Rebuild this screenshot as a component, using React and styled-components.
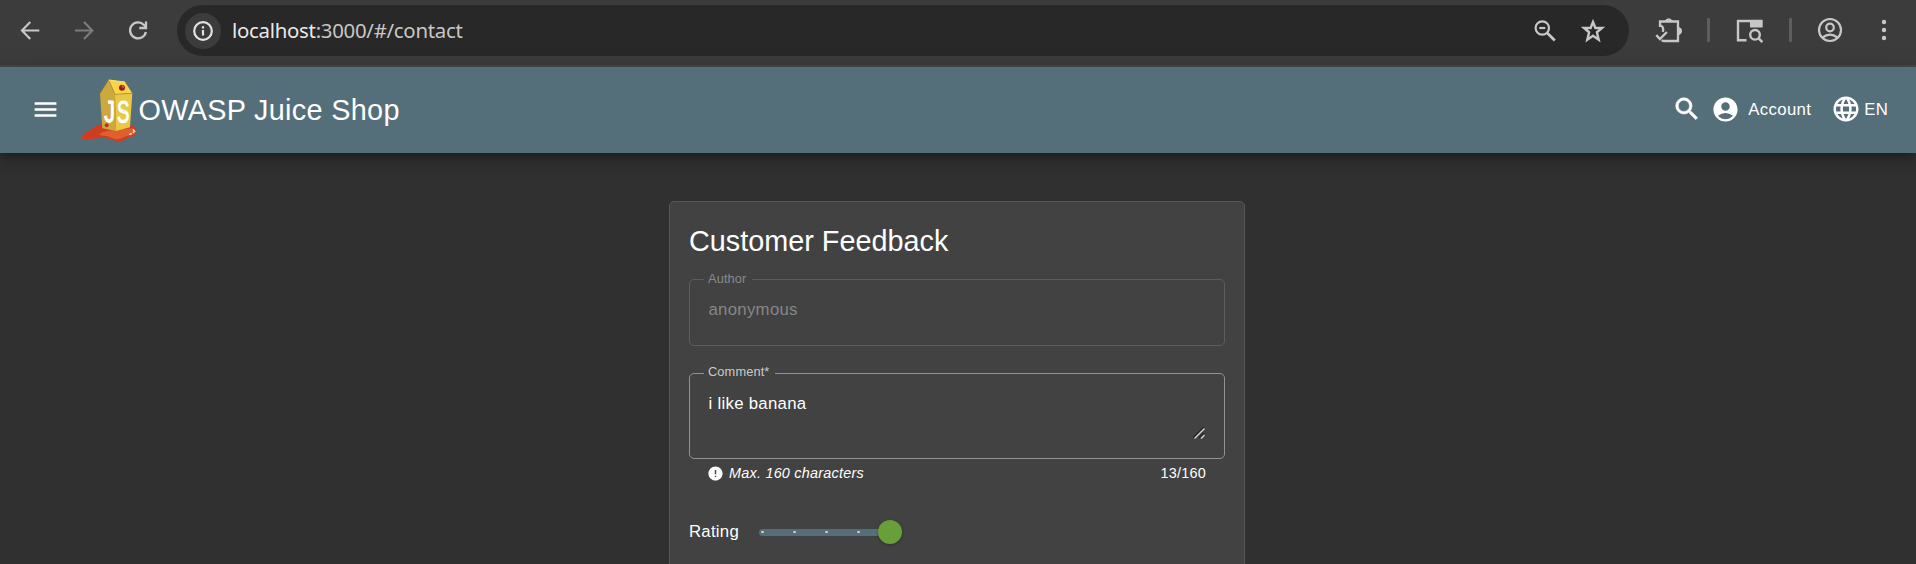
import React from "react";
import styled, { createGlobalStyle } from "styled-components";
import { MdMenu, MdSearch, MdAccountCircle, MdLanguage, MdError } from "react-icons/md";

const GlobalStyle = createGlobalStyle`
  * { box-sizing: border-box; }
  html, body { margin: 0; height: 100%; overflow: hidden; background: #303030; }
  body { font-family: "Liberation Sans", Arial, sans-serif; color: #fff; }
`;

const Page = styled.div`
  display: flex;
  flex-direction: column;
  width: 100%;
  height: 564px;
  overflow: hidden;
  background: #303030;
`;

const BrowserBar = styled.div`
  flex: none;
  display: flex;
  align-items: center;
  height: 67px;
  padding: 0 0 5px 19px;
  background: #3c3c3c;
  border-bottom: 2px solid #484848;
`;

const BrowserIcon = styled.svg`
  flex: none;
  display: block;
  width: ${(p) => p.$size || 22}px;
  height: ${(p) => p.$size || 22}px;
  margin-right: ${(p) => p.$gap || 0}px;
  fill: none;
  stroke: ${(p) => p.$color || "#c7c7c7"};
  stroke-width: 2.2;
`;

const AddressBar = styled.div`
  flex: none;
  display: flex;
  align-items: center;
  width: 1452px;
  height: 51px;
  padding: 0 24px 0 8px;
  margin: 1px 26px 0 0;
  border-radius: 26px;
  background: #282828;
`;

const SiteInfo = styled.div`
  display: flex;
  align-items: center;
  justify-content: center;
  width: 36px;
  height: 36px;
  border-radius: 50%;
  background: #3c3c3c;
`;

const Url = styled.div`
  flex: 1;
  margin-left: 11px;
  padding-bottom: 2px;
  font: 20.4px/28px "Noto Sans", "Open Sans", sans-serif;
  letter-spacing: -0.28px;
  color: #c7c7c7;
  white-space: nowrap;
`;

const Host = styled.span`
  color: #e8e8e8;
`;

const Divider = styled.div`
  flex: none;
  width: 3px;
  height: 24px;
  margin-right: ${(p) => p.$gap}px;
  background: #5e5e5e;
  border-radius: 1px;
`;

const Toolbar = styled.header`
  flex: none;
  position: relative;
  display: flex;
  align-items: center;
  height: 86px;
  padding: 0 28px 2px 31px;
  background: #546e7a;
  box-shadow: 0 4px 6px -1px rgba(0, 0, 0, 0.2), 0 7px 12px rgba(0, 0, 0, 0.14),
    0 1px 22px rgba(0, 0, 0, 0.12);
`;

const Logo = styled.svg`
  display: block;
  width: 58px;
  height: 64px;
  margin: 3px 0 0 20px;
`;

const Brand = styled.div`
  flex: 1;
  margin: 2px 0 0 0.5px;
  font-size: 28.8px;
  line-height: 34px;
  letter-spacing: 0.32px;
  white-space: nowrap;
`;

const SearchIcon = styled(MdSearch)`
  path:last-child {
    stroke: currentColor;
    stroke-width: 0.5px;
  }
`;

const ToolbarAction = styled.div`
  display: flex;
  align-items: center;
  gap: ${(p) => p.$gap || 0}px;
  margin-left: ${(p) => p.$before || 0}px;
  font-size: 16.8px;
  line-height: 20px;
  letter-spacing: ${(p) => p.$track || 0}px;
`;

const ActionLabel = styled.span`
  padding-top: 1px;
`;

const Main = styled.main`
  flex: 1;
  display: flex;
  justify-content: center;
  align-items: flex-start;
  padding: 48px 2px 0 0;
`;

const Card = styled.section`
  width: 576px;
  height: 500px;
  padding: 21px 19px 0;
  border: 1px solid #575757;
  border-radius: 5px;
  background: #424242;
`;

const Title = styled.h1`
  margin: 0;
  font-size: 28.8px;
  font-weight: 400;
  line-height: 36px;
`;

const Field = styled.fieldset`
  display: flex;
  min-width: 0;
  height: ${(p) => p.$height}px;
  margin: ${(p) => p.$before}px 0 0;
  padding: 11px 19px 0 18px;
  border: 1px solid ${(p) => (p.$disabled ? "#5e5e5e" : "#919191")};
  border-radius: 5px;
  color: ${(p) => (p.$disabled ? "#878787" : "#fff")};
  font-size: 16.8px;
  line-height: 24px;
  letter-spacing: 0.28px;
`;

const Legend = styled.legend`
  margin-left: -4px;
  padding: 0 6px 0 4px;
  font-size: 12.8px;
  line-height: 16px;
  letter-spacing: 0.12px;
  color: ${(p) => (p.$disabled ? "#8a8a8a" : "#cbcbcb")};
`;

const LegendText = styled.span`
  display: block;
  margin: ${(p) => (p.$raised ? "-1px 0 1px" : 0)};
`;

const FieldText = styled.div`
  flex: 1;
  padding-left: 0.5px;
`;

const ResizeGrip = styled.svg`
  align-self: flex-end;
  width: 12px;
  height: 12px;
  margin-bottom: 19px;
`;

const HintRow = styled.div`
  display: flex;
  align-items: center;
  height: 20px;
  margin-top: 4px;
  padding: 0 19px 0 18px;
  font-size: 14.4px;
  letter-spacing: 0.24px;
`;

const Hint = styled.em`
  flex: 1;
  margin-left: 5px;
`;

const RatingRow = styled.div`
  display: flex;
  align-items: center;
  height: 24px;
  margin-top: 37px;
  font-size: 16.8px;
  letter-spacing: 0.25px;
`;

const Slider = styled.div`
  display: flex;
  align-items: center;
  margin-left: 20px;
`;

const Track = styled.div`
  display: flex;
  align-items: center;
  gap: 29px;
  width: 131px;
  height: 7px;
  padding: 0 2px 1px;
  border-radius: 4px;
  background: #546e7a;
`;

const Tick = styled.i`
  flex: none;
  width: 3px;
  height: 2px;
  border-radius: 1px;
  background: #c9cfd2;
`;

const Thumb = styled.div`
  width: 24px;
  height: 24px;
  margin-left: -12.5px;
  border-radius: 50%;
  background: #689f38;
  box-shadow: 0 1px 3px rgba(0, 0, 0, 0.3);
`;

const LogoLetter = styled.text`
  font: 400 68px "Liberation Sans", Arial, sans-serif;
  fill: #fff;
  stroke: #fff;
  stroke-width: 2.5;
`;

function JuiceLogo() {
  return (
    <Logo viewBox="30 24 174 192">
      <path d="M35 198C36 188 52 185 65 174C76 163 90 158 110 160L180 163C196 165 202 174 197 188C190 200 176 197 163 206C148 216 137 210 120 204C99 198 74 204 48 205C39 205 34 203 35 198Z" fill="#cf3d20" />
      <path d="M88 192C98 176 130 178 159 173L190 172C202 181 195 192 181 193C168 194 156 203 142 205C128 205 119 194 101 194Q93 194 88 192Z" fill="#df5f2d" />
      <path d="M116 27L90 68L97 172L138 180L135 69Z" fill="#cda83c" />
      <path d="M116 27L165 33L187 67L135 70Z" fill="#fbd348" />
      <path d="M135 70L187 67L180 169L138 180Z" fill="#e9c846" />
      <path d="M90 68L116 27L135 70L187 67" fill="none" stroke="#a98528" strokeWidth="2" />
      <path d="M116 27L165 33" stroke="#ffe46c" strokeWidth="3" />
      <circle cx="156" cy="50" r="9" fill="#8f2413" />
      <circle cx="159" cy="47" r="4" fill="#dc4b2b" />
      <circle cx="110" cy="163" r="6" fill="#b93518" />
      <LogoLetter transform="translate(103 152) skewY(3) scale(1 1.35)" textLength="32" lengthAdjust="spacingAndGlyphs">J</LogoLetter>
      <LogoLetter transform="translate(141 155) skewY(-4) scale(1 1.34)" textLength="37" lengthAdjust="spacingAndGlyphs">S</LogoLetter>
      <path d="M190 176L194 181L190 184M179 190L184 188" fill="none" stroke="#ffe4dc" strokeWidth="4" strokeLinecap="round" />
    </Logo>
  );
}

export default function App() {
  return (
    <>
      <GlobalStyle />
      <Page>
        <BrowserBar>
          <BrowserIcon viewBox="0 0 22 22" $gap={32}>
            <path d="M20.3 11.5H3.5M11.3 3.1L3 11.5L11.3 19.9" />
          </BrowserIcon>
          <BrowserIcon viewBox="0 0 22 22" $gap={32} $color="#7c7c7c">
            <path d="M2 11.5H18.5M11 3.1L19.3 11.5L11 19.9" />
          </BrowserIcon>
          <BrowserIcon viewBox="0 0 22 22" $gap={28}>
            <path d="M18.9 13A8 8 0 1 1 17 5.9L19 8.1M19 2.5V9H12.3" strokeWidth="2.3" />
          </BrowserIcon>
          <AddressBar>
            <SiteInfo>
              <BrowserIcon viewBox="0 0 22 22" $color="#e3e3e3">
                <circle cx="11" cy="11" r="8.8" />
                <path d="M11 10V15.6M11 6.3V8.6" />
              </BrowserIcon>
            </SiteInfo>
            <Url><Host>localhost</Host>:3000/#/contact</Url>
            <BrowserIcon viewBox="0 0 24 24" $size={24} $gap={24}>
              <circle cx="9.3" cy="9" r="6.7" />
              <path d="M14 13.7L21.8 21.5" strokeWidth="2.7" />
              <path d="M6.3 9H12.3" />
            </BrowserIcon>
            <BrowserIcon viewBox="0 0 24 24" $size={24}>
              <path d="M12 3L14.4 9H21L15.9 13.3L17.7 20.8L12 16.8L6.3 20.8L8.1 13.3L3 9H9.6Z" strokeWidth="2.4" />
            </BrowserIcon>
          </AddressBar>
          <BrowserIcon viewBox="0 0 28 28" $size={28} $gap={24}>
            <path d="M5 11V5.5H23V25H8.5L6.5 24.2" strokeWidth="2.3" />
            <path d="M5 9.2Q9.5 11 7.7 15.8" />
            <path d="M10.1 5A4 3.8 0 0 1 17.3 5ZM23.5 11.3A4 3.8 0 0 1 23.5 18.7Z" fill="#c7c7c7" strokeWidth="1" />
            <path d="M1.3 19.2L4.9 23L11.9 16" strokeWidth="2.4" />
          </BrowserIcon>
          <Divider $gap={25} />
          <BrowserIcon viewBox="0 0 28 28" $size={28} $gap={26}>
            <path d="M11.5 24.3H3V5H26.3V11" strokeWidth="2.4" />
            <path d="M15 4H27.4V11.5H15Z" fill="#c7c7c7" stroke="none" />
            <circle cx="20" cy="18.8" r="4.8" strokeWidth="2.4" />
            <path d="M23.4 22.2L27.4 26.2" strokeWidth="2.6" />
          </BrowserIcon>
          <Divider $gap={25} />
          <BrowserIcon viewBox="0 0 26 26" $size={26} $gap={30}>
            <circle cx="13" cy="13" r="11" />
            <circle cx="13" cy="10.5" r="3.8" />
            <path d="M5.5 20.5Q13 14.8 20.5 20.5" />
          </BrowserIcon>
          <BrowserIcon viewBox="0 0 22 22" $size={22}>
            <path d="M11 3H11.01M11 11H11.01M11 19H11.01" strokeWidth="4.4" strokeLinecap="round" />
          </BrowserIcon>
        </BrowserBar>

        <Toolbar>
          <MdMenu size={29} />
          <JuiceLogo />
          <Brand>OWASP Juice Shop</Brand>
          <SearchIcon size={30} />
          <ToolbarAction $gap={8} $before={9} $track={0.35}>
            <MdAccountCircle size={29} />
            <ActionLabel>Account</ActionLabel>
          </ToolbarAction>
          <ToolbarAction $gap={3} $before={20} $track={0.2}>
            <MdLanguage size={30} />
            <ActionLabel>EN</ActionLabel>
          </ToolbarAction>
        </Toolbar>

        <Main>
          <Card>
            <Title>Customer Feedback</Title>
            <Field $disabled $height={75} $before={12}>
              <Legend $disabled><LegendText>Author</LegendText></Legend>
              <FieldText>anonymous</FieldText>
            </Field>
            <Field $height={94} $before={19}>
              <Legend><LegendText $raised>Comment*</LegendText></Legend>
              <FieldText>i like banana</FieldText>
              <ResizeGrip viewBox="0 0 12 12" fill="none" strokeWidth="1.4">
                <path d="M0 11L11 0M6 11L11 6" stroke="#202020" />
                <path d="M1.5 11.5L11.5 1.5M8 11.5L11.5 8" stroke="#d5d5d5" />
              </ResizeGrip>
            </Field>
            <HintRow>
              <MdError size={17} />
              <Hint>Max. 160 characters</Hint>
              <span>13/160</span>
            </HintRow>
            <RatingRow>
              Rating
              <Slider>
                <Track>
                  <Tick /><Tick /><Tick /><Tick />
                </Track>
                <Thumb />
              </Slider>
            </RatingRow>
          </Card>
        </Main>
      </Page>
    </>
  );
}
